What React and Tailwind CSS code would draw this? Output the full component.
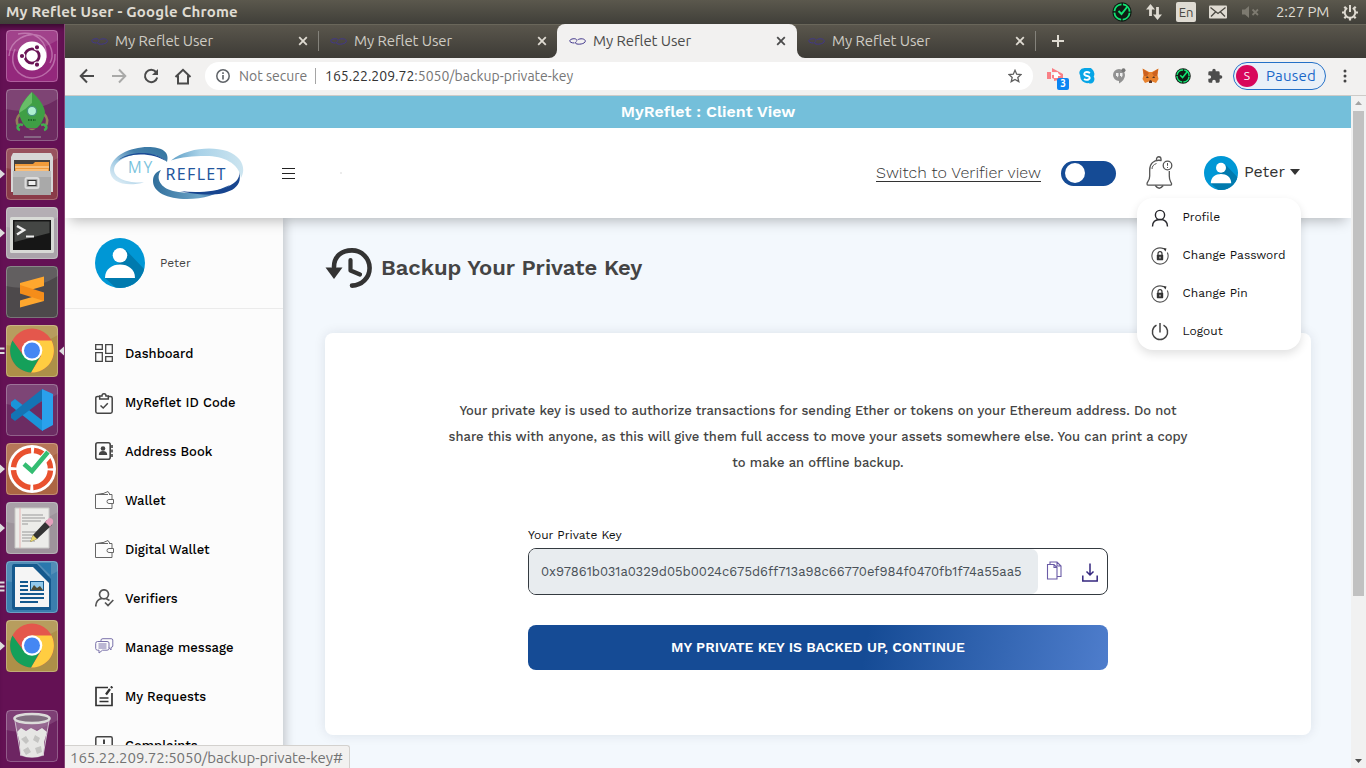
import React from "react";

const ui = "font-['Ubuntu','Noto_Sans',sans-serif]";
const ws = "font-['Work_Sans','Inter',sans-serif]";

/* ---------- desktop launcher ---------- */

function ChromeMark() {
  return (
    <g>
      <circle cx="26" cy="25.500" r="22" fill="#e4574c" />
      <path d="M26 15.500H45.500A22 22 0 0 1 25 47.500L35 31Z" fill="#ffcd41" />
      <path d="M6.500 15.500A22 22 0 0 0 25 47.500L34.700 30.500L17.400 30.500Z" fill="#15a05a" />
      <circle cx="26" cy="25.500" r="10.300" fill="#fff" />
      <circle cx="26" cy="25.500" r="8" fill="#4587f3" />
    </g>
  );
}

const launcher = [
  {
    bg: "bg-[#94287c]",
    art: (
      <g>
        <path d="M3 26C4 10 22 1 34 6C47 13 48 26 44 33M49 24C50 40 34 51 20 47C7 42 4 30 9 19M12 4C30 0 42 12 40 28" stroke="#d9a3cc" strokeOpacity=".55" strokeWidth="1.500" fill="none" />
        <circle cx="26" cy="26" r="14.500" fill="#fff" />
        <circle cx="26" cy="26" r="7.200" fill="none" stroke="#6a1355" strokeWidth="2.800" />
        <g fill="#6a1355" stroke="#fff" strokeWidth="1.200">
          <circle cx="16" cy="26" r="2.700" />
          <circle cx="31" cy="17.300" r="2.700" />
          <circle cx="31" cy="34.700" r="2.700" />
        </g>
      </g>
    ),
  },
  {
    bg: "bg-[#6d2b61]",
    art: (
      <g>
        <path d="M14 25Q8 31 13 38M38 25Q44 31 39 38" stroke="#90805a" strokeWidth="2.500" fill="none" />
        <path d="M26 3C33 9 39 18 39 24Q37 34 31 39H21Q15 34 13 24C13 18 19 9 26 3Z" fill="#3f9f45" />
        <path d="M26 3C20 9 14 17 13 24Q20 20 26 14Z" fill="#68bd68" />
        <circle cx="26" cy="22" r="4.600" fill="#aff0d0" stroke="#46947c" strokeWidth="1.300" />
        <path d="M22 31H30" stroke="#1f6b2b" strokeWidth="2" strokeDasharray="1.500 1" />
        <path d="M17 36C11 34 10 40 14 41M35 36C41 34 42 40 38 41" stroke="#43ad50" strokeWidth="2.600" fill="none" />
        <path d="M22 39.500Q26 43 30 39.500Z" fill="#90805a" />
        <path d="M18 48H35" stroke="#907a91" strokeWidth="1.500" />
      </g>
    ),
  },
  {
    bg: "bg-[#8a3b48]",
    art: (
      <g>
        <path d="M7 5H45L47 9V44H5V9Z" fill="#d7d7d7" />
        <path d="M8 12H44V24H8Z" fill="#43413f" />
        <path d="M9 16H27L29 14H43V23H9Z" fill="#f09b3a" />
        <path d="M9 19H43M10 22H42" stroke="#ffe2bb" strokeWidth="1" />
        <path d="M7 23H45V47H7Z" fill="#a9a9a9" />
        <path d="M7 23H45V29H7Z" fill="#bbb" />
        <rect x="19.500" y="30" width="13" height="10" rx="1.500" fill="none" stroke="#ddd" strokeWidth="2" />
        <rect x="22" y="32.500" width="8" height="5" fill="#eee" stroke="#333" />
      </g>
    ),
    left: 1,
  },
  {
    bg: "bg-[#aaa3aa]",
    art: (
      <g>
        <rect x="4" y="10" width="44" height="36" rx="1.500" fill="#d8dad6" />
        <rect x="7" y="13" width="38" height="30" fill="#161616" />
        <path d="M8.500 14.500H43.500V26L8.500 35Z" fill="#444644" />
        <path d="M11 19L18 23L11 27.500" fill="none" stroke="#eee" strokeWidth="2.500" />
        <path d="M20 29.500H28" stroke="#eee" strokeWidth="2" />
      </g>
    ),
    left: 1,
  },
  {
    bg: "bg-[#4d494b]",
    art: (
      <g>
        <path d="M14 17L38 10.500V20L14 27Z" fill="#ffa72e" />
        <path d="M14 34.500L38 27.500V35L14 41.500Z" fill="#ffa72e" />
        <path d="M14 19L38 26.500V35L14 27.500Z" fill="#f58d1a" />
      </g>
    ),
  },
  { bg: "bg-[#ad9048]", art: <ChromeMark />, left: 2, active: true },
  {
    bg: "bg-[#6c2c63]",
    art: (
      <g>
        <path d="M5 18L9 15L37 37V47L35 46L5 22Z" fill="#1a94d9" />
        <path d="M5 34L9 37L37 16V5L35 6L5 30Z" fill="#1474b4" />
        <path d="M36 5L47 10V41L36 47Z" fill="#2aa1ec" />
      </g>
    ),
  },
  {
    bg: "bg-[#ac6543]",
    art: (
      <g>
        <circle cx="26" cy="26" r="24" fill="#fff" />
        <circle cx="26" cy="26" r="18.500" fill="none" stroke="#e9512f" strokeWidth="5.500" strokeDasharray="26.060 3" strokeDashoffset="-1.500" />
        <path d="M18 22L26 29L43 10" fill="none" stroke="#fff" strokeWidth="9" />
        <path d="M18 21L26 28L42 9" fill="none" stroke="#34bd72" strokeWidth="4.500" />
      </g>
    ),
    left: 1,
  },
  {
    bg: "bg-[#9e949c]",
    art: (
      <g>
        <path d="M9 6H43V46H9Z" fill="#ecece9" stroke="#c9c9c6" />
        <path d="M14 6V46" stroke="#e7b5b5" />
        <path d="M16 13H37M16 16H39M16 19H35M16 22H22M16 30H34M16 33H30M16 36H32M16 39H29" stroke="#999" strokeWidth="1" />
        <path d="M24 40L27 33L41 18L46 23L31 37Z" fill="#333" />
        <path d="M24 40L27 33L31 37Z" fill="#e8d76c" />
        <path d="M39 20L43 16Q48 16 47 21L44 25Z" fill="#e5a0bd" />
      </g>
    ),
    left: 1,
  },
  {
    bg: "bg-[#3b7eae]",
    art: (
      <g>
        <path d="M8 3H31L45 18V49H8Q6 49 6 46V6Q6 3 8 3Z" fill="#15598d" />
        <path d="M32 2H45V15Z" fill="#2a78ad" />
        <path d="M9 6H27L43 22V46H9Z" fill="#f5f5f5" />
        <path d="M14 21H22M14 25H22M14 29H22M14 33H38M14 37H38M14 41H32" stroke="#14598e" strokeWidth="1.800" />
        <rect x="24.500" y="20.500" width="13" height="9" fill="#92c9ea" stroke="#14598e" />
        <path d="M25 29L28 24L31 27L34 25L37 29Z" fill="#4d4a32" />
      </g>
    ),
    left: 3,
  },
  { bg: "bg-[#ad9048]", art: <ChromeMark />, left: 1 },
];

const trash = (
  <g>
    <path d="M9 9L15 46Q26 50 37 46L43 9Z" fill="#a98aa8" fillOpacity=".55" />
    <path d="M11 22L15 18L20 21L25 18L31 21L36 18L41 22L38 32L38 45Q26 50 14 45L14 33Z" fill="#e6e6e4" />
    <path d="M15 29L20 26L23 31L20 34ZM29 25L34 28L32 33L27 30ZM17 40L22 37L25 42L20 45ZM29 38L35 36L36 42L31 44Z" fill="#c4c4c2" />
    <path d="M9 11L15 46M43 11L37 46" stroke="#d2c2d0" strokeWidth="1" />
    <ellipse cx="26" cy="8.500" rx="17.500" ry="4.500" fill="#816f80" stroke="#dcdcda" strokeWidth="2.600" />
  </g>
);

function LauncherIcon({ item, className = "" }) {
  return (
    <div className={`relative w-[52px] h-[52px] shrink-0 ${className}`}>
      <div className={`w-full h-full rounded-[4px] overflow-hidden ${item.bg}`}>
        <svg width="52" height="52" viewBox="0 0 52 52">
          <path d="M0 0H52V10Q26 26 0 20Z" fill="#fff" fillOpacity=".12" />
          {item.art}
          <rect x=".5" y=".5" width="51" height="51" rx="4" fill="none" stroke="#fff" strokeOpacity=".25" />
        </svg>
      </div>
      {item.left && (
        <svg className="absolute -left-[6px] top-[18px]" width="5" height="16" viewBox="0 0 5 16">
          {item.left === 1 && <path d="M0 3.500L5 8L0 12.500Z" fill="#ddd" />}
          {item.left === 2 && <path d="M0 5.500H4.500M0 10H4.500" stroke="#ddd" strokeWidth="2" />}
          {item.left === 3 && <path d="M0 3.500H4.500M0 7.500H4.500M0 11.500H4.500" stroke="#ddd" strokeWidth="2" />}
        </svg>
      )}
      {item.active && (
        <svg className="absolute -right-[6px] top-[21px]" width="6" height="10" viewBox="0 0 6 10">
          <path d="M6 .5L1 5L6 9.500Z" fill="#ddd" />
        </svg>
      )}
    </div>
  );
}

function Launcher() {
  return (
    <aside className="w-[65px] shrink-0 bg-[#641154] border-r border-[#864676] flex flex-col gap-[7px] pl-[6px] pt-[6px] pb-[6px] shadow-[inset_0_6px_5px_-3px_#3b0a31]">
      {launcher.map((item, i) => (
        <LauncherIcon key={i} item={item} />
      ))}
      <LauncherIcon className="mt-auto" item={{ bg: "bg-[#6d2562]", art: trash }} />
    </aside>
  );
}

/* ---------- system bar ---------- */

function CheckBadge({ size }) {
  return (
    <svg width={size} height={size} viewBox="0 0 20 20">
      <circle cx="10" cy="10" r="9.700" fill="#101c14" />
      <circle cx="10" cy="10" r="7.600" fill="none" stroke="#12e372" strokeWidth="1.800" strokeDasharray="10.440 1.500" strokeDashoffset="-.75" />
      <path d="M6.500 9L9.500 12L15.500 4.500" fill="none" stroke="#12e372" strokeWidth="2" />
    </svg>
  );
}

function SystemBar() {
  return (
    <div className={`h-6 shrink-0 flex items-center bg-linear-to-b from-[#5b584d] to-[#403f39] text-[#dfdbd2] pl-[6px] pr-[7px] ${ui}`}>
      <span className="text-[15px] font-bold leading-6 tracking-[0.2px]">My Reflet User - Google Chrome</span>
      <div className="ml-auto flex items-center">
        <CheckBadge size={20} />
        <svg className="ml-[13px]" width="19" height="18" viewBox="0 0 19 18">
          <path d="M5.500 13V5M12.500 4V12" stroke="#dfdbd2" strokeWidth="2.800" />
          <path d="M1 6.500L5.500 1L10 6.500ZM8 11.500L12.500 17L17 11.500Z" fill="#dfdbd2" />
        </svg>
        <span className="ml-[12px] w-5 h-5 rounded-[2px] bg-[#dfdbd2] text-[#4a4841] text-[13px] leading-[21px] text-center">En</span>
        <svg className="ml-[12px]" width="20" height="14" viewBox="0 0 20 14">
          <rect x="1" y="0.500" width="18" height="13" rx="1" fill="#dfdbd2" />
          <path d="M2.500 2.500L10 8.500L17.500 2.500M3 11.500L7.500 7M17 11.500L12.500 7" fill="none" stroke="#4a4841" strokeWidth="1.300" />
        </svg>
        <svg className="ml-[13px]" width="19" height="14" viewBox="0 0 19 14">
          <path d="M1 4.500H4L8 1V13L4 9.500H1Z" fill="#7d7a70" />
          <path d="M11.500 4.500L17 10M17 4.500L11.500 10" stroke="#7d7a70" strokeWidth="1.800" />
        </svg>
        <span className="ml-[16px] w-[53px] text-[15px] whitespace-nowrap tracking-[-0.2px] leading-6">2:27 PM</span>
        <svg className="ml-[12px]" width="18" height="18" viewBox="0 0 18 18">
          <path d="M6.200 5A5.300 5.300 0 1 0 11.800 5M9 2V9" fill="none" stroke="#dfdbd2" strokeWidth="2" />
          <path d="M3.300 3.800L5 5.500M14.700 3.800L13 5.500M1 9.500H3.500M14.500 9.500H17M3.300 15.200L5 13.500M14.700 15.200L13 13.500M9 15V17.500" stroke="#dfdbd2" strokeWidth="2.200" />
        </svg>
      </div>
    </div>
  );
}

/* ---------- browser chrome ---------- */

function Favicon() {
  return (
    <svg width="17" height="9" viewBox="0 0 17 9" fill="none" stroke="#42378c" strokeWidth="1">
      <path d="M5.500 6C0 6 -.5 3 3 2C6 1.300 8 2 7.500 3.500" />
      <path d="M8.500 3C11 1 16.300 1.500 16.300 4.200C16 7 9 8 6.800 6.500Q6 5 7.500 4.500" />
    </svg>
  );
}

function Cross({ color }) {
  return (
    <svg width="10" height="10" viewBox="0 0 10 10">
      <path d="M1.200 1.200L8.800 8.800M8.800 1.200L1.200 8.800" stroke={color} strokeWidth="1.800" />
    </svg>
  );
}

function Tab({ active, divider }) {
  return (
    <div className={`h-[34px] flex items-center pl-[12px] relative ${active ? "w-[240px] -mr-px pr-[11px] bg-[#f2f1f0] text-[#4b4b4b] rounded-t-[8px]" : "w-[239px] pr-[10px] text-[#cfccc4]"}`}>
      <Favicon />
      <span className="ml-[7px] text-[15px] tracking-[-0.08px]">My Reflet User</span>
      <span className="ml-auto">
        <Cross color={active ? "#4b4b4b" : "#dfdbd2"} />
      </span>
      {divider && <span className="absolute -right-px top-[7px] h-5 w-px bg-[#84827b]" />}
      {active && (
        <>
          <svg className="absolute -left-[8px] bottom-0" width="8" height="8"><path d="M8 0A8 8 0 0 1 0 8H8Z" fill="#f2f1f0" /></svg>
          <svg className="absolute -right-[8px] bottom-0" width="8" height="8"><path d="M0 0A8 8 0 0 0 8 8H0Z" fill="#f2f1f0" /></svg>
        </>
      )}
    </div>
  );
}

function TabStrip() {
  return (
    <div className="h-[34px] shrink-0 flex items-center bg-linear-to-b from-[#5b574d] to-[#3d3b36] pl-[14px] shadow-[inset_0_1px_0_#69665a]">
      <Tab divider />
      <Tab />
      <Tab active />
      <Tab divider />
      <svg className="ml-[17px]" width="12" height="12" viewBox="0 0 12 12">
        <path d="M6 0V12M0 6H12" stroke="#dfdbd2" strokeWidth="2" />
      </svg>
    </div>
  );
}

function Toolbar() {
  return (
    <div className="h-[38px] shrink-0 flex items-center bg-[#f2f1f0] border-b border-[#cdcbc8] pl-[14px] pb-px">
      <svg width="16" height="16" viewBox="0 0 16 16" fill="none" stroke="#4a4a4a" strokeWidth="2"><path d="M15 8H2M8 1.500L1.700 8L8 14.500" /></svg>
      <svg className="ml-[16px]" width="16" height="16" viewBox="0 0 16 16" fill="none" stroke="#a9a9a8" strokeWidth="2"><path d="M1 8H14M8 1.500L14.300 8L8 14.500" /></svg>
      <svg className="ml-[16px]" width="16" height="16" viewBox="0 0 16 16"><path d="M13 4A6.200 6.200 0 1 0 14.200 9.500" fill="none" stroke="#4a4a4a" strokeWidth="2" /><path d="M15 1V7H9Z" fill="#4a4a4a" /></svg>
      <svg className="ml-[15px]" width="18" height="17" viewBox="0 0 18 17" fill="none" stroke="#4a4a4a" strokeWidth="2"><path d="M1.500 9L9 1.800L16.500 9M4 7.500V15.500H14V7.500" /></svg>
      <div className="ml-[13px] w-[828px] h-7 rounded-full bg-white flex items-center pl-[11px] pr-[11px] text-[14px]">
        <svg width="14" height="14" viewBox="0 0 14 14"><circle cx="7" cy="7" r="6.200" fill="none" stroke="#5f6368" strokeWidth="1.500" /><path d="M7 6V10.500M7 3.300V5" stroke="#5f6368" strokeWidth="1.600" /></svg>
        <span className="ml-[9px] w-[69px] whitespace-nowrap text-[#767676]">Not secure</span>
        <span className="ml-[7px] h-4 w-px bg-[#a5a5a5]" />
        <span className="ml-[9px] whitespace-nowrap text-[#767676]"><span className="text-[#333]">165.22.209.72</span>:5050/backup-private-key</span>
        <svg className="ml-auto" width="14" height="14" viewBox="0 0 14 14"><path d="M7 1.300L8.700 5.200L13 5.600L9.800 8.400L10.800 12.600L7 10.400L3.200 12.600L4.200 8.400L1 5.600L5.300 5.200Z" fill="none" stroke="#5f5f5f" strokeWidth="1.300" /></svg>
      </div>
      <div className="relative ml-[14px] w-[22px] h-7">
        <svg className="mt-[6px]" width="18" height="15" viewBox="0 0 18 15"><path d="M0 4H4V11H0ZM5 4V0L16 6V11L7 13V11L5 10V7H11V4Z" fill="#f98086" /><path d="M7 5H11L14 8H11V10H7Z" fill="#fff" /></svg>
        <span className="absolute right-0 bottom-0 w-3 h-3 rounded-[2px] bg-[#0b85f2] text-white text-[10px] leading-3 font-bold text-center">3</span>
      </div>
      <svg className="ml-[10px]" width="16" height="16" viewBox="0 0 16 16"><path d="M5 .2A6.800 6.800 0 0 1 14.700 8.800Q16.300 11 14.500 14Q12.300 16.500 9.500 15A7 7 0 0 1 1.200 7.500Q-.5 5 1 2.500Q2.500 0 5 .2Z" fill="#07a5e6" /><path d="M11 5Q8 3.300 6 4.500Q4.300 6.500 6.500 7.500L9.500 8.300Q12 10 9.500 11.500Q7 12.500 5 11" fill="none" stroke="#fff" strokeWidth="1.900" /></svg>
      <svg className="ml-[17px]" width="14" height="16" viewBox="0 0 14 16"><path d="M7 1A6 6 0 0 1 13 7Q13 12 7 15.500V13A6 6 0 0 1 7 1Z" fill="#929292" /><path d="M4 5H6.500V8L5 9.500V8H4ZM8 5H10.500V8L9 9.500V8H8Z" fill="#eee" /><circle cx="11.500" cy="2.300" r="2" fill="#777" /></svg>
      <svg className="ml-[16px]" width="17" height="16" viewBox="0 0 17 16"><path d="M.5 .5L7 4H10L16.500 .5L15.500 7L16.500 11L14 15L10 13.500L9 15H8L7 13.500L3 15L.5 11L1.500 7Z" fill="#e8822e" /><path d="M5 8L7 10H4ZM12 8L10 10H13Z" fill="#563525" /><path d="M7 13L8.500 12L10 13V15H7Z" fill="#5b3527" /><path d="M1 1L7 5L5 8H2Z" fill="#cd611f" /><path d="M16 1L10 5L12 8H15Z" fill="#cd611f" /></svg>
      <span className="ml-[16px]"><CheckBadge size={16} /></span>
      <svg className="ml-[16px]" width="16" height="16" viewBox="0 0 24 24"><path d="M20.500 11H19V7a2 2 0 0 0-2-2h-4V3.500a2.500 2.500 0 0 0-5 0V5H4a2 2 0 0 0-2 2v3.800h1.500a2.700 2.700 0 0 1 0 5.400H2V20a2 2 0 0 0 2 2h3.800v-1.500a2.700 2.700 0 0 1 5.400 0V22H17a2 2 0 0 0 2-2v-4h1.500a2.500 2.500 0 0 0 0-5Z" fill="#4d4d4d" /></svg>
      <div className="ml-[10px] w-[93px] h-7 rounded-full border border-[#2470c7] bg-[#e9f0f8] flex items-center pl-[2px]">
        <span className="w-[22px] h-[22px] rounded-full bg-[#d8065b] text-white text-[12px] leading-[22px] text-center">S</span>
        <span className="ml-[8px] text-[15px] text-[#1967c8] tracking-[0.2px]">Paused</span>
      </div>
      <svg className="ml-[17px]" width="4" height="14" viewBox="0 0 4 14" fill="#444"><circle cx="2" cy="2" r="1.500" /><circle cx="2" cy="7" r="1.500" /><circle cx="2" cy="12" r="1.500" /></svg>
    </div>
  );
}

/* ---------- page ---------- */

function Avatar({ size }) {
  return (
    <svg width={size} height={size} viewBox="0 0 50 50" className="shrink-0">
      <defs><clipPath id={`disc${size}`}><circle cx="25" cy="25" r="25" /></clipPath></defs>
      <g clipPath={`url(#disc${size})`}>
        <rect width="50" height="50" fill="#0097d5" />
        <path d="M30 11L50 32V50H21L10 40L24 25Z" fill="#007aae" />
        <circle cx="25" cy="17.300" r="7.300" fill="#fff" />
        <path d="M10 40C10 31 17 26.500 25 26.500S40 31 40 40Z" fill="#fff" />
      </g>
    </svg>
  );
}

function Logo() {
  return (
    <svg width="134" height="54" viewBox="0 0 134 54" className="shrink-0 mt-[2px]">
      <defs>
        <linearGradient id="l1" x1="0" y1="1" x2="1" y2="0"><stop offset="0" stopColor="#eef7fb" /><stop offset=".35" stopColor="#a4cce4" /><stop offset=".65" stopColor="#4480ac" /><stop offset="1" stopColor="#34749f" /></linearGradient>
        <linearGradient id="l2" x1="0" y1="0" x2="1" y2="0"><stop offset="0" stopColor="#5f9fc6" /><stop offset=".4" stopColor="#a9d2e8" /><stop offset="1" stopColor="#cde5f0" /></linearGradient>
        <linearGradient id="l3" x1="0" y1="0" x2="1" y2="0"><stop offset="0" stopColor="#316f9c" /><stop offset=".6" stopColor="#6ba3c6" /><stop offset="1" stopColor="#1c4e97" /></linearGradient>
      </defs>
      <path d="M34 35.500C16 40 0 36 0 23C1 9 20 0 38 0C52 0 60 5 57 15C49 7 36 5 23 8C10 11 4 17 4 23C5 33 20 36 34 35.500Z" fill="url(#l1)" />
      <path d="M8 13C20 4 44 3 56 14C45 7 24 4 8 13Z" fill="#1a4a95" />
      <path d="M61 13.500C77 1 101 -1 117 4C133 10 136 22 131 31C129 16 113 9 96 9C82 9 72 10 61 13.500Z" fill="url(#l2)" />
      <path d="M51 23C45 32 51 41 63 44C77 47 92 46 103 45L120 38C108 48 93 52 77 52C57 52 43 45 43 34C43 28 46 25 51 23Z" fill="url(#l3)" />
      <path d="M129 25C134 42 116 47.500 100 47.500C85 47.500 76 45.500 70 44C87 46.500 106 44.500 117 40C127 35 130 31 129 25Z" fill="#17458f" />
      <g className="font-['Noto_Sans',sans-serif]">
        <text x="18" y="25.500" fontSize="15.500" fontWeight="300" fill="#6dbdda" stroke="#6dbdda" strokeWidth=".2" textLength="24">MY</text>
        <text x="55.500" y="32.500" fontSize="16" fontWeight="400" fill="#24569d" textLength="60">REFLET</text>
      </g>
    </svg>
  );
}

function PersonIcon({ size = 18 }) {
  return (
    <svg width={size} height={size} viewBox="0 0 18 18" fill="none" stroke="#26262b" strokeWidth="1.400">
      <circle cx="9" cy="6" r="4.600" />
      <path d="M1.500 17.500C1.500 12.500 4.500 10.500 9 10.500S16.500 12.500 16.500 17.500" />
    </svg>
  );
}

function LockIcon() {
  return (
    <svg width="18" height="18" viewBox="0 0 18 18" fill="none">
      <path d="M12.500 1.700A8.100 8.100 0 1 0 16.300 5.500" stroke="#555" strokeWidth="1.100" />
      <path d="M11.500 .8L15.500 1.500L14.500 4.500" fill="#333" />
      <rect x="5.800" y="7.800" width="6.400" height="5.400" rx=".6" fill="#333" />
      <path d="M7 8V6.700A2 2 0 0 1 11 6.700V8" stroke="#333" strokeWidth="1.200" />
      <path d="M9 9.700V11.500" stroke="#fff" strokeWidth="1" />
    </svg>
  );
}

function PowerIcon() {
  return (
    <svg width="18" height="18" viewBox="0 0 18 18" fill="none" stroke="#444" strokeWidth="1.500">
      <path d="M5.500 2.200A7.600 7.600 0 1 0 12.500 2.200M9 0V9.500" />
    </svg>
  );
}

function UserMenu() {
  const rows = [
    ["Profile", <PersonIcon />],
    ["Change Password", <LockIcon />],
    ["Change Pin", <LockIcon />],
    ["Logout", <PowerIcon />],
  ];
  return (
    <div className="absolute z-30 top-[70px] right-[50px] w-[164px] h-[152px] rounded-[16px] bg-white shadow-[0_4px_10px_rgba(0,0,0,0.12)] flex flex-col">
      {rows.map(([label, icon]) => (
        <div key={label} className="h-[38px] flex items-center pl-[14px] gap-[13.500px] text-[12px] text-[#111] whitespace-nowrap">
          <span className="w-[18px] shrink-0 pt-[2px]">{icon}</span>
          <span>{label}</span>
        </div>
      ))}
    </div>
  );
}

function Header() {
  return (
    <header className="relative z-20 h-[90px] shrink-0 bg-white flex items-center pl-[45px] pr-[50px] shadow-[0_8px_12px_-5px_rgba(0,0,0,0.25)]">
      <Logo />
      <svg className="ml-[38px] -mt-px" width="13" height="14" viewBox="0 0 13 14"><path d="M0 2.500H13M0 7.500H13M0 12.500H13" stroke="#222" strokeWidth="1.200" /></svg>
      <span className="ml-[45px] w-[2px] h-[2px] bg-[#ececec]" />
      <span className="ml-auto text-[16px] font-light text-[#333] underline underline-offset-[3px] decoration-1 whitespace-nowrap">Switch to Verifier view</span>
      <div className="ml-[20px] mt-[1px] w-[55px] h-[25px] rounded-full bg-[#154b95] pl-[4px] pb-px flex items-center">
        <span className="w-5 h-5 rounded-full bg-white" />
      </div>
      <svg className="ml-[30px]" width="27" height="34" viewBox="0 0 27 34" fill="none" stroke="#555" strokeWidth="1.300">
        <path d="M15.500 4.500C7 3 3.700 8.500 3.700 14V20C3.700 25 1 25.500 1 28Q1 29.200 2.500 29.200H24Q26 29.200 25.500 27.500C24.500 25 23.300 25 23.300 20V15" />
        <path d="M10.500 4.500V3A2 2 0 0 1 15 3V4.500M9.300 29.500Q13.200 35 17.200 29.500" />
        <path d="M6 13Q6 9 10.500 7.500" strokeWidth="1" />
        <circle cx="21.500" cy="9.500" r="4.300" />
        <path d="M21.500 7V9.800M21.500 11V12" strokeWidth="1" />
      </svg>
      <span className="ml-[31px]"><Avatar size={34} /></span>
      <span className="ml-[6px] mb-[2px] w-[42px] text-[16px] text-[#333] whitespace-nowrap">Peter</span>
      <svg className="ml-[4px] mb-[3px] mr-px" width="10" height="6" viewBox="0 0 10 6"><path d="M0 0H10L5 6Z" fill="#333" /></svg>
      <UserMenu />
    </header>
  );
}

const s = { fill: "none", stroke: "#444", strokeWidth: 1.3 };
const wallet = (
  <svg width="19" height="20" viewBox="0 0 19 20" {...s} stroke="#666" strokeWidth="1"><path d="M14 4.500H17V9M17 14V18.500H.5V4.500H6L13 1.500L15 4.500M6 4.500H13M1 4.500L8 3.500M18.500 9.500H14A2 2 0 0 0 14 13.500H18.500Z" /></svg>
);
const menu = [
  ["Dashboard", "-mt-px", <svg width="18" height="18" viewBox="0 0 18 18" {...s}><path d="M.7 .7H7.300V5.300H.7ZM10.700 .7H17.300V9.300H10.700ZM.7 8.700H7.300V17.300H.7ZM10.700 12.700H17.300V17.300H10.700Z" /></svg>],
  ["MyReflet ID Code", "mt-px", <svg width="18" height="21" viewBox="0 0 18 21" {...s} strokeWidth="1.500"><path d="M5 3.500H2.500Q.8 3.500 .8 5V18.500Q.8 20.200 2.500 20.200H15.500Q17.200 20.200 17.200 18.500V5Q17.200 3.500 15.500 3.500H13" /><path d="M4.700 6V3H7Q7 .8 9 .8T11 3H13.300V6Z" /><path d="M5.500 12.500L8.200 15L12.800 10.300" /></svg>],
  ["Address Book", "-mt-px", <svg width="19" height="18" viewBox="0 0 19 18" {...s}><rect x=".8" y=".8" width="14.400" height="16.400" rx="2" strokeWidth="1.600" /><circle cx="8" cy="6.500" r="2.300" fill="#444" stroke="none" /><path d="M3.800 13Q3.800 9 8 9T12.200 13Z" fill="#444" stroke="none" /><path d="M17 3V6M17 7.500V10.500M17 12V15" strokeWidth="1.600" /></svg>],
  ["Wallet", "-mt-px", wallet],
  ["Digital Wallet", "-mt-px", wallet],
  ["Verifiers", "-mt-px", <svg width="19" height="18" viewBox="0 0 19 18" {...s} stroke="#555" strokeWidth="1.700"><circle cx="9" cy="5.300" r="4.500" /><path d="M.8 17.500Q.8 10.500 7 9.500M11 9.500L14.500 11.500M10 13.500L13 16.500L18.300 11" /></svg>],
  ["Manage message", "-mt-[3px]", <svg width="19" height="17" viewBox="0 0 19 17" {...s} stroke="#7a72aa" strokeWidth="1"><path d="M6 3.500V2Q6 .7 8 .7H16Q17.800 .7 17.800 2V8Q17.800 9.200 16 9.500V12L14 9.500M2.500 3.500H12Q14 3.500 14 5V10.500Q14 12.200 12 12.200H7.500L4 15V12.200H2.500Q.7 12 .7 10.500V5.500Q.7 3.500 2.500 3.500ZM3.500 6H11.500M3.500 8H11.500M3.500 10H11.500" /></svg>],
  ["My Requests", "mt-0", <svg width="19" height="21" viewBox="0 0 19 21" {...s} stroke="#333" strokeWidth="1.700"><path d="M13 1.500H1V19.500H17V7M4.500 12H13.500M4.500 15.500H13.500" /><path d="M11 8.500L15 3M16 2L17.300 .5" strokeWidth="2.300" /></svg>],
  ["Complaints", "mt-px", <svg width="18" height="20" viewBox="0 0 18 20" {...s} strokeWidth="1.500"><rect x=".8" y=".8" width="16.400" height="15" rx="1.500" /><path d="M9 3.500V8M9 9.500V11.500" strokeWidth="2" /></svg>],
];

function Sidebar() {
  return (
    <nav className="relative z-10 w-[218px] shrink-0 bg-[#fcfcfc] shadow-[2px_0_10px_rgba(0,0,0,0.22)] flex flex-col">
      <div className="h-[91px] shrink-0 border-b border-[#ebebeb] flex items-center pl-[30px] gap-[15px]">
        <Avatar size={50} />
        <span className="text-[12px] text-[#444]">Peter</span>
      </div>
      <ul className="pt-[20px]">
        {menu.map(([label, nudge, icon]) => (
          <li key={label} className="h-[49px] flex items-center pl-[30px] text-[13px] font-medium text-black whitespace-nowrap">
            <span className={`w-[30px] shrink-0 ${nudge}`}>{icon}</span>
            <span>{label}</span>
          </li>
        ))}
      </ul>
    </nav>
  );
}

function Content() {
  return (
    <main className="flex-1 min-w-0 bg-[#f3f8fd] pl-[42px] pr-[40px] pt-[28px]">
      <div className="flex items-center h-[44px]">
        <svg width="47" height="42" viewBox="0 0 47 42" fill="none" stroke="#333" strokeLinecap="round">
          <path d="M9 20C9 9 17 3.400 27 3.400A17.600 17.600 0 0 1 27 38.600" strokeWidth="4.600" />
          <path d="M.5 20.500H17.500L9 32Z" fill="#333" stroke="none" />
          <path d="M25.500 13V23.500L35 27.500" strokeWidth="4.200" strokeLinejoin="round" />
        </svg>
        <h1 className="ml-[9px] text-[22px] leading-none font-semibold text-[#444] whitespace-nowrap">Backup Your Private Key</h1>
      </div>
      <section className="mt-[43px] h-[402px] rounded-[8px] bg-white shadow-[0_0_12px_rgba(0,30,60,0.1)] flex flex-col items-center pt-[65px]">
        <p className="text-center text-[13px] font-medium leading-[26px] text-[#444] whitespace-nowrap">
          Your private key is used to authorize transactions for sending Ether or tokens on your Ethereum address. Do not<br />
          share this with anyone, as this will give them full access to move your assets somewhere else. You can print a copy<br />
          to make an offline backup.
        </p>
        <div className="mt-[50px] w-[580px] flex flex-col">
          <label className="h-[22px] leading-[18px] text-[12px] text-[#111]">Your Private Key</label>
          <div className="h-[47px] rounded-[8px] border border-[#343a40] flex items-center">
            <div className="w-[509px] h-full rounded-[7px] bg-[#e8ecef] pl-[12px] flex items-center text-[13px] text-[#495057] whitespace-nowrap">
              0x97861b031a0329d05b0024c675d6ff713a98c66770ef984f0470fb1f74a55aa5
            </div>
            <svg className="ml-[8px] mb-[2px]" width="16" height="19" viewBox="0 0 16 19" fill="none" stroke="#6a5ba6" strokeWidth="1.100"><path d="M1.500 3.500H8L11 6.500V18H1.500ZM8 3.500V6.500H11M4 3.500V1H11L15 5V15.500H11M11 1V5H15" /></svg>
            <svg className="ml-[20px] mt-[2px]" width="16" height="19" viewBox="0 0 16 19" fill="none" stroke="#35277f" strokeWidth="1.500"><path d="M8 .5V12M4.500 8.500L8 12L11.500 8.500M.8 12.500V18H15.200V12.500" /></svg>
          </div>
          <button className="mt-[30px] h-[45px] rounded-[8px] bg-[linear-gradient(100deg,#154b95_58%,#4e7dcc)] text-white text-[14px] font-semibold whitespace-nowrap">MY PRIVATE KEY IS BACKED UP, CONTINUE</button>
        </div>
      </section>
    </main>
  );
}

export default function App() {
  return (
    <div className="w-[1366px] h-[768px] overflow-hidden flex flex-col bg-white">
      <SystemBar />
      <div className="flex-1 min-h-0 flex">
        <Launcher />
        <div className={`relative flex-1 min-w-0 flex flex-col ${ui}`}>
          <TabStrip />
          <Toolbar />
          <div className="flex-1 min-h-0 flex">
            <div className={`flex-1 min-w-0 overflow-hidden flex flex-col ${ws}`}>
              <div className="h-8 shrink-0 bg-[#74bfda] text-white text-[16px] font-semibold leading-8 text-center">MyReflet : Client View</div>
              <Header />
              <div className="flex-1 min-h-0 flex overflow-hidden">
                <Sidebar />
                <Content />
              </div>
            </div>
            <div className="w-[15px] shrink-0 bg-[#f1f1f1] flex flex-col items-center">
              <svg className="mt-[5px] shrink-0" width="7" height="4"><path d="M0 4L3.500 0L7 4Z" fill="#a3a3a3" /></svg>
              <div className="mt-[6px] w-[11px] h-[485px] bg-[#c1c1c1]" />
              <svg className="mt-auto mb-[5px] shrink-0" width="7" height="4"><path d="M0 0L3.500 4L7 0Z" fill="#505050" /></svg>
            </div>
          </div>
          <div className="absolute z-40 left-0 bottom-0 w-[285px] h-[23px] bg-[#f2f1f0] border-t border-r border-[#d3d1ce] rounded-tr-[3px] pl-[5px] text-[15px] leading-[23px] text-[#737373] whitespace-nowrap tracking-[-0.08px]">165.22.209.72:5050/backup-private-key#</div>
        </div>
      </div>
    </div>
  );
}
